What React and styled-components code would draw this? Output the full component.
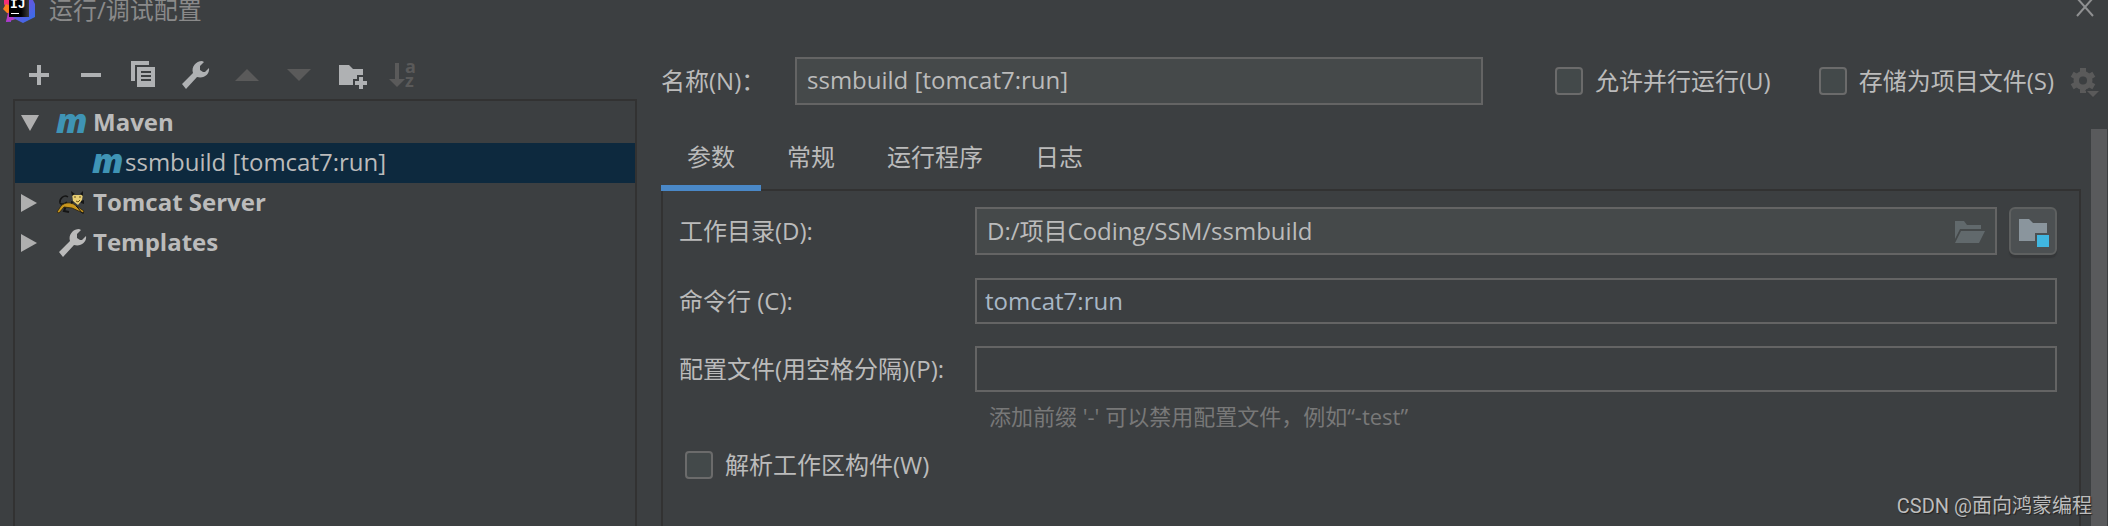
import React from "react";
import styled, { createGlobalStyle } from "styled-components";

const GlobalStyle = createGlobalStyle`
  * { box-sizing: border-box; }
  body { margin: 0; background: #3c3f41; }
`;

const ui = `"Open Sans", "Noto Sans CJK SC", sans-serif`;

const Dialog = styled.div`
  position: relative;
  display: flex;
  flex-direction: column;
  min-height: 100vh;
  overflow: hidden;
  background: #3c3f41;
  color: #bbbbbb;
  font: 24px/32px ${ui};
`;

const TitleBar = styled.header`
  display: flex;
  align-items: flex-start;
  height: 24px;
  padding: 0 13px 0 3px;
`;

const Title = styled.h1`
  flex: 1;
  margin: 0 0 0 14px;
  color: #8a8a8a;
  font-size: 24px;
  font-weight: 400;
  line-height: 20px;
`;

const Svg = styled.svg`
  display: block;
  flex: none;
  overflow: visible;
  fill: currentColor;
`;

const IconButton = styled.button`
  display: flex;
  flex: none;
  padding: 0;
  border: 0;
  background: none;
  color: ${(p) => (p.$dim ? "#5a5a5a" : "#afb1b3")};
`;

const Columns = styled.main`
  display: flex;
  flex: 1;
  gap: 24px;
  padding-left: 13px;
`;

const Sidebar = styled.aside`
  display: flex;
  flex-direction: column;
  flex: 0 0 624px;
`;

const Toolbar = styled.div`
  display: flex;
  gap: 20px;
  height: 75px;
  padding: 35px 10px 0;
`;

const Tree = styled.ul`
  flex: 1;
  margin: 0;
  padding: 2px 0;
  list-style: none;
  border: 2px solid #323232;
  border-bottom: 0;
`;

const TreeRow = styled.li`
  display: flex;
  align-items: center;
  height: 40px;
  padding-left: ${(p) => (p.$child ? 77 : 6)}px;
  gap: 17px;
  background: ${(p) => (p.$selected ? "#0d293e" : "transparent")};
  font-weight: ${(p) => (p.$child ? 400 : 700)};
`;

const TreeLabel = styled.span`
  display: flex;
  align-items: center;
  gap: ${(p) => (p.$tight ? 1 : 5)}px;
`;

const TreeText = styled.span`
  padding-bottom: 2px;
`;

const MavenMark = styled.span`
  width: 32px;
  padding-bottom: 6px;
  color: #3f94b5;
  font: italic 800 34px/36px "Open Sans", sans-serif;
`;

const Editor = styled.section`
  display: flex;
  flex-direction: column;
  flex: 1;
  min-width: 0;
`;

const NameRow = styled.div`
  display: flex;
  align-items: center;
  height: 105px;
  padding: 9px 8px 0 0;
`;

const NameLabel = styled.label`
  flex: 0 0 134px;
`;

const TextInput = styled.input`
  flex: 1;
  min-width: 0;
  height: ${(p) => (p.$plain ? 46 : 48)}px;
  padding: ${(p) => (p.$plain ? "0 8px 2px" : "0 10px 4px")};
  border: 2px solid #646464;
  border-radius: 0;
  outline: 0;
  background: ${(p) => (p.$plain ? "#3c3f41" : "#45494a")};
  color: ${(p) => (p.$plain ? "#a9b7c6" : "#bbbbbb")};
  font: 24px/32px ${ui};
`;

const CheckLabel = styled.label`
  display: flex;
  align-items: center;
  gap: 12px;
  white-space: nowrap;
`;

const CheckBox = styled.input`
  appearance: none;
  width: 28px;
  height: 28px;
  margin: 0;
  border: 2px solid #6b6b6b;
  border-radius: 4px;
  background: #43494a;
`;

const Options = styled.div`
  display: flex;
  align-items: center;
  gap: 48px;
  margin: 0 14px 0 72px;
`;

const Body = styled.div`
  display: flex;
  flex: 1;
  gap: 10px;
  padding-right: 1px;
`;

const TabArea = styled.div`
  display: flex;
  flex-direction: column;
  flex: 1;
  min-width: 0;
`;

const Tabs = styled.div`
  display: flex;
  height: 62px;
`;

const Tab = styled.button`
  padding: 0 26px;
  border: 0;
  border-bottom: 6px solid ${(p) => (p.$active ? "#4a88c7" : "transparent")};
  background: none;
  color: inherit;
  font: inherit;
  z-index: 1;
`;

const Panel = styled.form`
  flex: 1;
  margin-top: -2px;
  padding: 16px 22px 0 16px;
  border: 2px solid #323232;
  border-bottom: 0;
`;

const Field = styled.div`
  display: flex;
  align-items: center;
  gap: 12px;
  margin-bottom: ${(p) => p.$after}px;
`;

const FieldLabel = styled.label`
  flex: 0 0 284px;
  white-space: nowrap;
`;

const PathBox = styled.div`
  display: flex;
  align-items: center;
  flex: 1;
  border: 2px solid #646464;
  background: #45494a;
  padding-right: 9px;
`;

const PathInput = styled(TextInput)`
  height: 44px;
  border: 0;
`;

const BrowseButton = styled(IconButton)`
  color: #61696c;
`;

const ModuleButton = styled.button`
  display: flex;
  align-items: center;
  justify-content: center;
  width: 48px;
  height: 48px;
  padding: 0;
  border: 2px solid #5e6060;
  border-radius: 6px;
  background: #4c5052;
  color: #8a959d;
  box-shadow: 0 3px 1px #353739;
`;

const Hint = styled.p`
  margin: 0 0 18px 310px;
  color: #787878;
  font-size: 22px;
  line-height: 30px;
`;

const LastCheck = styled(CheckLabel)`
  margin-left: 6px;
`;

const ScrollThumb = styled.div`
  width: 16px;
  background: #595a5c;
`;

const Watermark = styled.span`
  position: absolute;
  right: 16px;
  bottom: 6px;
  color: #bdbdbd;
  font: 20px/28px Roboto, "Noto Sans CJK SC", sans-serif;
  text-shadow: 1px 1px 1px #222222;
`;

const Icon = ({ w = 32, h = 32, children }) => (
  <Svg width={w} height={h} viewBox={`0 0 ${w} ${h}`} aria-hidden="true">{children}</Svg>
);

const Logo = () => (
  <Icon h={24}>
    <defs>
      <linearGradient id="left" x1="0" y1="0" x2="0" y2="1">
        <stop offset="0" stopColor="#fe2d75" />
        <stop offset="0.5" stopColor="#d5397e" />
        <stop offset="1" stopColor="#8a3fd0" />
      </linearGradient>
      <linearGradient id="right" x1="0" y1="0" x2="1" y2="1">
        <stop offset="0" stopColor="#8a45d8" />
        <stop offset="1" stopColor="#2d73ea" />
      </linearGradient>
      <linearGradient id="tile" x1="0" y1="0" x2="1" y2="0">
        <stop offset="0.6" stopColor="#000" />
        <stop offset="1" stopColor="#3a3a3a" />
      </linearGradient>
    </defs>
    <path d="M1 0H8V22H3L5 12L1 4Z" fill="url(#left)" />
    <path d="M0 9L3 4L8 6V13H4Z" fill="#fc801d" />
    <path d="M6 12L3 22L13 19Z" fill="#b43bc4" />
    <path d="M24 0H30L32 4V17L20 23L10 18Z" fill="url(#right)" />
    <rect x="6" width="20" height="17" fill="url(#tile)" />
    <text x="7" y="8" fill="#fff" fontFamily="Liberation Mono" fontWeight="700" fontSize="13">IJ</text>
    <rect x="8" y="13" width="8" height="1" fill="#fff" />
  </Icon>
);

const Plus = () => <Icon><path d="M14 6H18V14H26V18H18V26H14V18H6V14H14Z" /></Icon>;
const Minus = () => <Icon><path d="M6 14H26V18H6Z" /></Icon>;
const Copy = () => (
  <Icon>
    <path d="M4 2H22V6H8V22H4Z" />
    <path fillRule="evenodd" d="M10 8H28V28H10ZM14 12V14H24V12ZM14 16V18H24V16ZM14 20V22H24V20Z" />
  </Icon>
);
const Wrench = () => (
  <Icon>
    <path d="M3 25L14 14C12 8 17 2 23 2L25 3L21 7V11L24 13H26L30 9C31 15 25 20 18 18L7 30Z" />
  </Icon>
);
const Up = () => <Icon><path d="M16 10L28 22H4Z" /></Icon>;
const Down = () => <Icon><path d="M4 10H28L16 22Z" /></Icon>;
const FolderAdd = () => (
  <Icon>
    <path d="M4 6H14L18 10H28V16H22V20H18V26H4Z" />
    <path d="M24 18H28V22H32V26H28V30H24V26H20V22H24Z" />
  </Icon>
);
const Sort = () => (
  <Icon>
    <path d="M8 4H12V20H18L10 28L2 20H8Z" />
    <text x="18" y="14" fontFamily="Open Sans" fontWeight="700" fontSize="18">a</text>
    <text x="18" y="28" fontFamily="Open Sans" fontWeight="700" fontSize="18">z</text>
  </Icon>
);
const Gear = () => {
  const teeth = [0, 60, 120];
  return (
    <Icon>
      {teeth.map((a) => (
        <rect key={a} x="12" y="3" width="6" height="25" transform={`rotate(${a} 15 15.5)`} />
      ))}
      <circle cx="15" cy="15.5" r="7" fill="none" stroke="currentColor" strokeWidth="5" />
      <circle cx="15" cy="15.5" r="4" fill="#3c3f41" />
      <path d="M17 25H33L25 34Z" fill="#3c3f41" />
      <path d="M19 26H31L25 32Z" />
    </Icon>
  );
};
const OpenFolder = () => (
  <Icon>
    <path d="M1 6H10L13 10H27V14H6L1 24Z" />
    <path d="M7 16H31L25 28H1Z" />
  </Icon>
);
const ModuleFolder = () => (
  <Icon>
    <path d="M2 4H12L16 8H30V18H18V26H2Z" />
    <rect x="20" y="20" width="12" height="12" fill="#40b6e0" />
  </Icon>
);
const Arrow = ({ open }) => (
  <Icon w={18} h={20}>
    <path d={open ? "M0 2H18L9 18Z" : "M0 1V19L16 10Z"} fill="#afafaf" />
  </Icon>
);
const Tomcat = () => (
  <Icon>
    <path d="M12 10C8 7 3 12 4 16C5 18 8 17 11 15" fill="none" stroke="#151515" strokeWidth="1.5" />
    <path d="M10 19L8 24L13 25" fill="none" stroke="#151515" strokeWidth="2" />
    <path d="M1 25L5 19C9 15 15 15 19 18L28 24L27 26L16 21L8 20L3 26Z" fill="#c8961e" stroke="#2a210c" strokeWidth="0.8" />
    <path d="M16 7L19 8H24L27 7L26 13L22 18L17 14Z" fill="#e8cf74" />
    <path d="M15 4L19 7L16 9ZM27 4L24 7L27 9ZM25 14L28 13V17L25 16ZM15 14L18 15L15 17Z" fill="#151515" />
    <path d="M18 10H20M23 10H25M20 14L22 15L24 13" fill="none" stroke="#6b5116" strokeWidth="1" />
    <path d="M20 19L22 21L26 26H28" fill="none" stroke="#151515" strokeWidth="1" />
  </Icon>
);

export default function App() {
  return (
    <Dialog>
      <GlobalStyle />
      <TitleBar>
        <Logo />
        <Title>运行/调试配置</Title>
        <IconButton type="button" aria-label="关闭">
          <Icon w={20} h={20}><path d="M2 -2L18 16M18 -2L2 16" stroke="#8f9091" strokeWidth="2" /></Icon>
        </IconButton>
      </TitleBar>
      <Columns>
        <Sidebar>
          <Toolbar>
            <IconButton type="button" aria-label="添加"><Plus /></IconButton>
            <IconButton type="button" aria-label="移除"><Minus /></IconButton>
            <IconButton type="button" aria-label="复制"><Copy /></IconButton>
            <IconButton type="button" aria-label="编辑模板"><Wrench /></IconButton>
            <IconButton type="button" $dim aria-label="上移"><Up /></IconButton>
            <IconButton type="button" $dim aria-label="下移"><Down /></IconButton>
            <IconButton type="button" aria-label="新建文件夹"><FolderAdd /></IconButton>
            <IconButton type="button" $dim aria-label="排序"><Sort /></IconButton>
          </Toolbar>
          <Tree>
            <TreeRow><Arrow open /><TreeLabel><MavenMark>m</MavenMark><TreeText>Maven</TreeText></TreeLabel></TreeRow>
            <TreeRow $child $selected><TreeLabel $tight><MavenMark>m</MavenMark><TreeText>ssmbuild [tomcat7:run]</TreeText></TreeLabel></TreeRow>
            <TreeRow><Arrow /><TreeLabel><Tomcat /><TreeText>Tomcat Server</TreeText></TreeLabel></TreeRow>
            <TreeRow><Arrow /><TreeLabel><Wrench /><TreeText>Templates</TreeText></TreeLabel></TreeRow>
          </Tree>
        </Sidebar>
        <Editor>
          <NameRow>
            <NameLabel htmlFor="name">名称(N)：</NameLabel>
            <TextInput id="name" defaultValue="ssmbuild [tomcat7:run]" />
            <Options>
              <CheckLabel><CheckBox type="checkbox" />允许并行运行(U)</CheckLabel>
              <CheckLabel><CheckBox type="checkbox" />存储为项目文件(S)</CheckLabel>
            </Options>
            <IconButton type="button" $dim aria-label="存储选项"><Gear /></IconButton>
          </NameRow>
          <Body>
            <TabArea>
              <Tabs>
                <Tab $active type="button">参数</Tab>
                <Tab type="button">常规</Tab>
                <Tab type="button">运行程序</Tab>
                <Tab type="button">日志</Tab>
              </Tabs>
              <Panel>
                <Field $after={23}>
                  <FieldLabel htmlFor="dir">工作目录(D):</FieldLabel>
                  <PathBox>
                    <PathInput id="dir" defaultValue="D:/项目Coding/SSM/ssmbuild" />
                    <BrowseButton type="button" aria-label="浏览"><OpenFolder /></BrowseButton>
                  </PathBox>
                  <ModuleButton type="button" aria-label="模块目录"><ModuleFolder /></ModuleButton>
                </Field>
                <Field $after={22}>
                  <FieldLabel htmlFor="cmd">命令行 (C):</FieldLabel>
                  <TextInput $plain id="cmd" defaultValue="tomcat7:run" />
                </Field>
                <Field $after={9}>
                  <FieldLabel htmlFor="profiles">配置文件(用空格分隔)(P):</FieldLabel>
                  <TextInput $plain id="profiles" />
                </Field>
                <Hint>添加前缀 '-' 可以禁用配置文件，例如“-test”</Hint>
                <LastCheck><CheckBox type="checkbox" />解析工作区构件(W)</LastCheck>
              </Panel>
            </TabArea>
            <ScrollThumb />
          </Body>
        </Editor>
      </Columns>
      <Watermark>CSDN @面向鸿蒙编程</Watermark>
    </Dialog>
  );
}
